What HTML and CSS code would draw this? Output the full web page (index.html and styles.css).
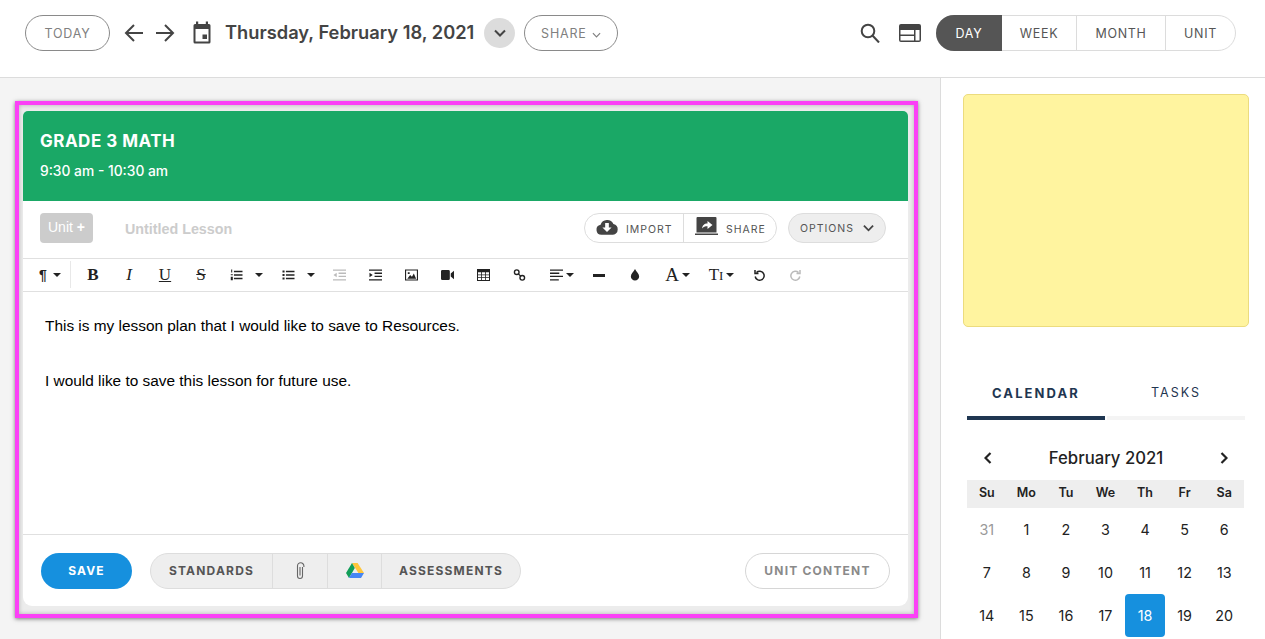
FILE: index.html
```html
<!DOCTYPE html>
<html lang="en">
<head>
<meta charset="utf-8">
<title>Lesson plan</title>
<link rel="stylesheet" href="styles.css">
</head>
<body>
<header class="topbar">
  <button class="pill today">TODAY</button>
  <svg class="arrow arrow-l" viewBox="0 0 20 20"><path d="M10 2 2 10l8 8M2 10h17"/></svg>
  <svg class="arrow arrow-r" viewBox="0 0 20 20"><path d="M10 2l8 8-8 8M18 10H1"/></svg>
  <svg class="cal-icon" viewBox="0 0 20 23"><path d="M1.500 4.500a1.500 1.500 0 0 1 1.500-1.500h1V.5h2.200V3h7.600V.5H16V3h1a1.500 1.500 0 0 1 1.500 1.500V21a1.500 1.500 0 0 1-1.500 1.500H3A1.500 1.500 0 0 1 1.500 21zM3.500 8v12.500h13V8zM10.500 13.500h4.500V18h-4.500z" fill-rule="evenodd"/></svg>
  <h1 class="date">Thursday, February 18, 2021</h1>
  <span class="date-toggle"><svg viewBox="0 0 12 8"><path d="M1 1.500 6 6.500l5-5"/></svg></span>
  <button class="pill share">SHARE <svg viewBox="0 0 10 6"><path d="M1 1l4 4 4-4"/></svg></button>
  <span class="spacer"></span>
  <svg class="search" viewBox="0 0 20 20"><circle cx="8" cy="8" r="6.300"/><path d="M12.500 12.500 19 19.500"/></svg>
  <svg class="layout" viewBox="0 0 22 18"><path fill-rule="evenodd" d="M2 0h18a2 2 0 0 1 2 2v14a2 2 0 0 1-2 2H2a2 2 0 0 1-2-2V2a2 2 0 0 1 2-2zM1.500 6v4.500H15V6zM1.500 12v4.500H15V12zM16.500 6v10.500h4V6z"/></svg>
  <nav class="views">
    <a class="view view-day active">DAY</a>
    <a class="view view-week">WEEK</a>
    <a class="view view-month">MONTH</a>
    <a class="view view-unit">UNIT</a>
  </nav>
</header>

<div class="body">
  <main class="main">
    <section class="frame">
      <article class="card">
        <div class="card-head">
          <h2>GRADE 3 MATH</h2>
          <p>9:30 am - 10:30 am</p>
        </div>
        <div class="lesson-row">
          <span class="unit-tag">Unit <b>+</b></span>
          <span class="lesson-title">Untitled Lesson</span>
          <span class="spacer"></span>
          <div class="io">
            <span class="io-btn io-import">
              <svg viewBox="0 0 24 17"><path fill-rule="evenodd" d="M6 17a5.500 5.500 0 0 1-1-10.900A7.500 7.500 0 0 1 19 5.200 6 6 0 0 1 18.500 17zM10 4v5H7l5 5 5-5h-3V4z"/></svg>
              IMPORT
            </span>
            <span class="io-btn io-share">
              <svg viewBox="0 0 23 19"><path fill-rule="evenodd" d="M2.500 0h18a1 1 0 0 1 1 1v14.500h-20V1a1 1 0 0 1 1-1zM0 16.500h23V18H0zM12.500 4v2.500c-3.500 0-5 2-5.500 5 1.300-1.700 3-2.300 5.500-2.300V12l5-4z"/></svg>
              SHARE
            </span>
          </div>
          <span class="options">OPTIONS <svg viewBox="0 0 12 8"><path d="M1 1.500 6 6.500l5-5"/></svg></span>
        </div>
        <div class="toolbar">
          <span class="tool tool-para"><span class="glyph-para">¶</span><i class="caret"></i></span>
          <span class="tool glyph-b">B</span>
          <span class="tool glyph-i">I</span>
          <span class="tool glyph-u">U</span>
          <span class="tool glyph-s">S</span>
          <span class="tool tool-list">
            <svg viewBox="0 0 14 14"><path d="M4 2h10v1.800H4zM4 6.100h10v1.800H4zM4 10.200h10V12H4zM.800 .500h1.200v3.500H.800zM.300 6h2.400v1.200H.300zM.300 9h2.400v4H.300z"/></svg><i class="caret"></i>
          </span>
          <span class="tool tool-list">
            <svg viewBox="0 0 14 14"><path d="M4 2h10v1.800H4zM4 6.100h10v1.800H4zM4 10.200h10V12H4zM0 1.800h2.400v2.300H0zM0 5.900h2.400v2.300H0zM0 10h2.400v2.300H0z"/></svg><i class="caret"></i>
          </span>
          <span class="tool off">
            <svg viewBox="0 0 14 12"><path d="M0 0h14v1.500H0zM6 3.400h8v1.400H6zM6 6.800h8v1.400H6zM0 10.500h14V12H0zM4 3.500v5L.500 6z"/></svg>
          </span>
          <span class="tool">
            <svg viewBox="0 0 14 12"><path d="M0 0h14v1.500H0zM6 3.400h8v1.400H6zM6 6.800h8v1.400H6zM0 10.500h14V12H0zM.500 3.500v5L4 6z"/></svg>
          </span>
          <span class="tool">
            <svg viewBox="0 0 14 12"><path fill-rule="evenodd" d="M0 0h14v12H0zM1.200 1.200v9.600h11.600V1.200zM2.500 10l3-4 2 2 2-3.500 2.500 5.500zM3 3h2v2H3z"/></svg>
          </span>
          <span class="tool">
            <svg viewBox="0 0 14 11"><path d="M1.500 0h6.500A1.500 1.500 0 0 1 9.500 1.500v8A1.500 1.500 0 0 1 8 11H1.500A1.500 1.500 0 0 1 0 9.500v-8A1.500 1.500 0 0 1 1.500 0zM10.500 4 14 1v9l-3.500-3z"/></svg>
          </span>
          <span class="tool">
            <svg class="table-icon" viewBox="0 0 13 12"><path fill-rule="evenodd" d="M0 0h13v12H0zM1 3.300V5.500h3.200V3.300zM5 3.300V5.500h3V3.300zM8.800 3.300V5.500H12V3.300zM1 6.300v2H4.200v-2zM5 6.300v2h3v-2zM8.800 6.300v2H12v-2zM1 9.100V11H4.200V9.100zM5 9.100V11h3V9.100zM8.800 9.100V11H12V9.100z"/></svg>
          </span>
          <span class="tool">
            <svg class="link-icon" viewBox="0 0 13 13"><circle cx="3.500" cy="3.500" r="2.500"/><circle cx="9.500" cy="9.500" r="2.500"/><path d="M5 5l3 3"/></svg>
          </span>
          <span class="tool tool-align tool-al">
            <svg viewBox="0 0 14 12"><path d="M0 0h14v1.500H0zM0 3.400h10v1.400H0zM0 6.800h14v1.400H0zM0 10.500h9.500V12H0z"/></svg><i class="caret"></i>
          </span>
          <span class="tool"><i class="hr-bar"></i></span>
          <span class="tool">
            <svg class="drop" viewBox="0 0 10 13"><path d="M5 0c1.500 3 4.500 5 4.500 8a4.500 4.500 0 0 1-9 0C.500 5 3.500 3 5 0z"/></svg>
          </span>
          <span class="tool tool-align"><span class="glyph-a">A</span><i class="caret"></i></span>
          <span class="tool tool-align"><span class="glyph-t">T<small>I</small></span><i class="caret"></i></span>
          <span class="tool">
            <svg class="hist" viewBox="0 0 12 12"><path d="M3 3.500A4.500 4.500 0 1 1 1.700 7.500M1.500 1v3.500H5"/></svg>
          </span>
          <span class="tool off">
            <svg class="hist" viewBox="0 0 12 12"><path d="M9 3.500A4.500 4.500 0 1 0 10.300 7.500M10.500 1v3.500H7"/></svg>
          </span>
        </div>
        <div class="editor">
          <p>This is my lesson plan that I would like to save to Resources.</p>
          <p>I would like to save this lesson for future use.</p>
        </div>
        <div class="card-foot">
          <button class="save">SAVE</button>
          <div class="attach">
            <span class="att att-std">STANDARDS</span>
            <span class="att att-clip">
              <svg viewBox="0 0 10 18"><path d="M7.500 5v9a2.500 2.500 0 0 1-5 0V4a3.200 3.200 0 0 1 6.400 0v1M5 5v8.500"/></svg>
            </span>
            <span class="att att-drive">
              <svg viewBox="0 0 18 15"><path fill="#ffc63a" d="M6 0h5.600L18 10h-5.600z"/><path fill="#119e58" d="M6 0l2.800 5L3 15 0 10z"/><path fill="#4686f4" d="M5.800 10H18l-3 5H3z"/></svg>
            </span>
            <span class="att att-assess">ASSESSMENTS</span>
          </div>
          <span class="spacer"></span>
          <button class="unit-content">UNIT CONTENT</button>
        </div>
      </article>
    </section>
  </main>

  <aside class="side">
    <div class="note"></div>
    <div class="tabs">
      <span class="tab tab-on">CALENDAR</span>
      <span class="tab">TASKS</span>
    </div>
    <div class="month">
      <svg viewBox="0 0 8 12"><path d="M6.500 1 1.500 6l5 5"/></svg>
      <span>February 2021</span>
      <svg viewBox="0 0 8 12"><path d="M1.500 1l5 5-5 5"/></svg>
    </div>
    <div class="grid weekdays">
      <span>Su</span><span>Mo</span><span>Tu</span><span>We</span><span>Th</span><span>Fr</span><span>Sa</span>
    </div>
    <div class="grid days">
      <span class="muted">31</span><span>1</span><span>2</span><span>3</span><span>4</span><span>5</span><span>6</span>
      <span>7</span><span>8</span><span>9</span><span>10</span><span>11</span><span>12</span><span>13</span>
      <span>14</span><span>15</span><span>16</span><span>17</span><span class="sel">18</span><span>19</span><span>20</span>
    </div>
  </aside>
</div>
</body>
</html>
```
FILE: styles.css
```css
* { box-sizing: border-box; }
html, body { height: 100%; }
body {
  margin: 0;
  height: 639px;
  overflow: hidden;
  background: #fff;
  font-family: "Inter", "Open Sans", sans-serif;
  color: #333;
}
h1, h2, p { margin: 0; }
button { font-family: inherit; cursor: pointer; }
.spacer { flex: 1; }

/* top bar */
.topbar {
  height: 78px;
  display: flex;
  align-items: center;
  padding: 0 29px 11px 25px;
  border-bottom: 1px solid #dcdcdc;
  background: #fff;
}
.pill {
  height: 36px;
  border: 1px solid #8a8a8a;
  border-radius: 18px;
  background: #fff;
  color: #808080;
  font-size: 12.500px;
  letter-spacing: .8px;
  padding: 0;
}
.today { width: 85px; }
.arrow { width: 20px; height: 20px; fill: none; stroke: #444; stroke-width: 2; }
.arrow-l { margin-left: 14px; }
.arrow-r { margin-left: 11px; }
.cal-icon { width: 22px; height: 23px; margin: -2px 0 0 16px; fill: #444; }
.date {
  margin: -2px 0 0 12px;
  width: 251px;
  font-size: 18.300px;
  font-weight: 600;
  color: #444;
  white-space: nowrap;
}
.date-toggle {
  width: 31px; height: 30px; margin-left: 8px;
  border-radius: 50%;
  background: #dcdcdc;
  display: flex; align-items: center; justify-content: center;
}
.date-toggle svg { width: 12px; height: 8px; fill: none; stroke: #444; stroke-width: 2; }
.share { width: 94px; margin-left: 9px; }
.share svg { width: 9px; height: 6px; fill: none; stroke: #808080; stroke-width: 1.300; margin-left: 1px; }
.search { width: 20px; height: 20px; fill: none; stroke: #444; stroke-width: 2; }
.layout { width: 22px; height: 18px; margin-left: 19px; fill: #444; }
.views {
  display: flex;
  height: 36px;
  margin-left: 15px;
  border: 1px solid #dcdcdc;
  border-radius: 18px;
  font-size: 12.500px;
  letter-spacing: .7px;
  color: #555;
}
.view { display: flex; align-items: center; justify-content: center; border-right: 1px solid #dcdcdc; }
.view-day { width: 66px; margin: -1px 0 -1px -1px; border-radius: 18px 0 0 18px; border-right: 0; }
.view-week { width: 75px; }
.view-month { width: 89px; }
.view-unit { width: 69px; border-right: 0; }
.active { background: #555; color: #fff; }

/* layout */
.body { display: flex; height: 561px; }
.main {
  width: 940px;
  background: #f4f4f4;
  padding: 23px 22px 0 15px;
}
.side {
  width: 325px;
  border-left: 1px solid #dcdcdc;
  background: #fff;
  padding: 16px 20px 0 22px;
}

/* magenta frame and card */
.frame {
  border: 4px solid #fb40f6;
  padding: 6px 6px 8px 4px;
  height: 517px;
  box-shadow: 0 1px 4px rgba(0,0,0,.5), inset 0 0 4px rgba(0,0,0,.25);
  background: #ececec;
}
.card {
  height: 495px;
  background: #fff;
  border-radius: 5px 5px 9px 9px;
  display: flex;
  flex-direction: column;
  overflow: hidden;
}
.card-head {
  height: 90px;
  background: #1aa866;
  color: #fff;
  padding: 20px 17px 0;
}
.card-head h2 { font-size: 17px; font-weight: 700; letter-spacing: .5px; line-height: 21px; }
.card-head p { font-size: 13.800px; font-weight: 500; margin-top: 10px; line-height: 18px; }

.lesson-row {
  height: 58px;
  display: flex;
  align-items: center;
  padding: 0 22px 4px 17px;
  border-bottom: 1px solid #e0e0e0;
  flex: none;
}
.unit-tag {
  width: 53px; height: 30px;
  border-radius: 4px;
  background: #ccc;
  color: #fff;
  font-family: "Liberation Sans", sans-serif;
  font-size: 14px;
  line-height: 28px;
  text-align: center;
}
.lesson-title {
  margin: 2px 0 0 32px;
  font-family: "Liberation Sans", sans-serif;
  font-weight: 700;
  font-size: 14.300px;
  color: #ccc;
}
.io {
  display: flex;
  height: 30px;
  border: 1px solid #ddd;
  border-radius: 15px;
  font-size: 10.500px;
  letter-spacing: 1px;
  color: #555;
}
.io-btn { display: flex; align-items: center; padding-top: 3px; }
.io-import { width: 99px; padding-left: 11px; border-right: 1px solid #ddd; }
.io-share { width: 92px; padding-left: 11px; }
.io-import svg { width: 22px; height: 16px; margin: -5px 8px 0 0; fill: #444; }
.io-share svg { width: 23px; height: 19px; margin: -6px 8px 0 0; fill: #444; }
.options {
  margin-left: 11px;
  width: 98px; height: 30px;
  padding-top: 1px;
  border: 1px solid #ddd;
  border-radius: 15px;
  background: #eee;
  font-size: 10.500px;
  letter-spacing: 1px;
  color: #555;
  display: flex; align-items: center; justify-content: center; gap: 9px;
}
.options svg { width: 11px; height: 8px; fill: none; stroke: #444; stroke-width: 2; }

/* toolbar */
.toolbar {
  height: 33px;
  flex: none;
  display: flex;
  align-items: center;
  border-bottom: 1px solid #e0e0e0;
  color: #222;
  font-family: "Liberation Serif", serif;
}
.tool {
  width: 36px; height: 100%;
  flex: none;
  display: flex; align-items: center; justify-content: center; gap: 6px;
  font-size: 17px;
}
.tool svg { width: 13px; height: 12px; fill: #222; }
.tool.off svg { fill: #bbb; }
.tool-para {
  width: 48px;
  margin-right: 4px;
  padding-left: 6px;
  position: relative;
  gap: 6px;
}
.tool-para::after {
  content: "";
  position: absolute; right: 0; top: 2px; bottom: 3px;
  width: 1px; background: #e8e8e8;
}
.glyph-para { font-family: "Liberation Sans", sans-serif; font-size: 14px; font-weight: 700; }
.caret {
  width: 0; height: 0;
  border: 4px solid transparent;
  border-top: 4px solid #222;
  border-bottom: 0;
}
.glyph-b { font-weight: 700; }
.glyph-i { font-style: italic; }
.glyph-u { text-decoration: underline; }
.glyph-s { text-decoration: line-through; }
.tool-list { width: 51px; gap: 12px; padding-left: 4px; }
.tool-list + .tool-list { width: 50px; margin-right: 1px; padding-left: 6px; }
.tool-align { width: 44px; gap: 3px; padding-left: 5px; }
.tool-al { padding-left: 5px; }
.hr-bar { width: 12px; height: 3px; background: #222; }
.tool .drop { width: 10px; height: 12px; }
.glyph-a { font-size: 19px; }
.glyph-t { font-size: 17px; }
.glyph-t small { font-size: 13px; }
.tool .link-icon, .tool .hist { fill: none; stroke: #222; stroke-width: 1.500; }
.tool.off .hist { fill: none; stroke: #bbb; }

/* editor */
.editor {
  flex: 1;
  padding: 25px 22px 0;
  font-family: "Liberation Sans", sans-serif;
  font-size: 15.400px;
  line-height: 17px;
  color: #000;
}
.editor p + p { margin-top: 38px; }

/* footer */
.card-foot {
  height: 72px;
  flex: none;
  display: flex;
  align-items: center;
  padding: 0 18px 0 18px;
  border-top: 1px solid #e0e0e0;
}
.save {
  width: 91px; height: 36px;
  border: 0;
  border-radius: 18px;
  background: #1690de;
  color: #fff;
  font-size: 12px;
  font-weight: 700;
  letter-spacing: 1.200px;
}
.attach {
  display: flex;
  height: 36px;
  margin-left: 18px;
  border: 1px solid #ddd;
  border-radius: 18px;
  background: #eee;
  font-size: 12px;
  font-weight: 700;
  letter-spacing: 1.200px;
  color: #555;
}
.att { display: flex; align-items: center; justify-content: center; border-right: 1px solid #ddd; }
.att-std { width: 122px; }
.att-clip { width: 55px; }
.att-drive { width: 54px; }
.att-assess { width: 138px; border-right: 0; }
.att-clip svg { width: 10px; height: 18px; fill: none; stroke: #666; stroke-width: 1.100; }
.att-drive svg { width: 18px; height: 15px; }
.unit-content {
  width: 145px; height: 36px;
  border: 1px solid #d6d6d6;
  border-radius: 18px;
  background: #fff;
  color: #8a8a8a;
  font-size: 12px;
  font-weight: 700;
  letter-spacing: 1.200px;
}

/* sidebar */
.note {
  width: 286px; height: 233px;
  background: #fff49f;
  border: 1px solid #ecdc7e;
  border-radius: 5px;
}
.tabs {
  display: flex;
  gap: 2px;
  margin: 58px 0 0 4px;
  width: 278px;
}
.tab {
  width: 138px;
  height: 35px;
  border-bottom: 4px solid #f4f4f4;
  text-align: center;
  font-size: 12.500px;
  letter-spacing: 2px;
  color: #1f3651;
  line-height: 16px;
}
.tab-on { border-bottom-color: #1f3651; font-weight: 700; font-size: 13px; letter-spacing: 2.100px; }
.month {
  margin: 27px 0 0 4px;
  width: 278px;
  height: 22px;
  padding: 0 17px;
  display: flex;
  align-items: center;
  justify-content: space-between;
  font-size: 16.700px;
  font-weight: 500;
  color: #222;
}
.month svg { width: 8px; height: 12px; fill: none; stroke: #222; stroke-width: 2.200; }
.grid {
  display: grid;
  grid-template-columns: repeat(7, 1fr);
  width: 277px;
  margin-left: 4px;
  text-align: center;
  color: #222;
  font-size: 14.300px;
}
.weekdays {
  margin-top: 11px;
  height: 28px;
  background: #eee;
  font-size: 12.500px;
  font-weight: 600;
  line-height: 26px;
}
.days { grid-auto-rows: 43px; line-height: 43px; }
.muted { color: #999; }
.sel { background: #1690de; color: #fff; border-radius: 4px; }
```
